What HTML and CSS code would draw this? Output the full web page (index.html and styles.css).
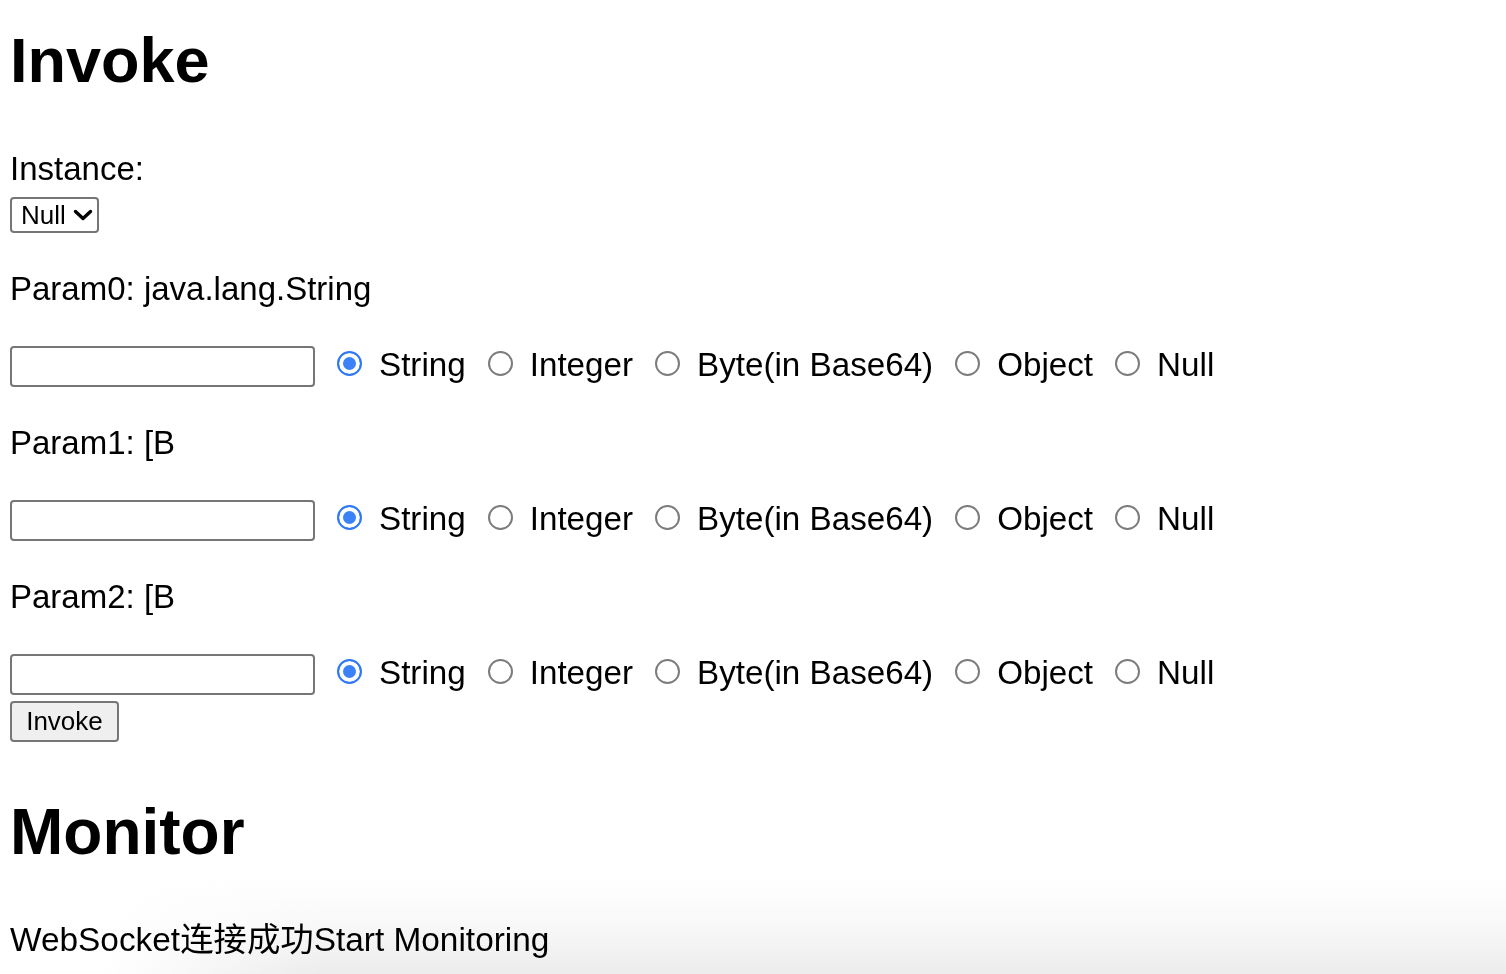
FILE: index.html
```html
<!DOCTYPE html>
<html lang="en">
<head>
<meta charset="utf-8">
<title>Invoke</title>
<link rel="stylesheet" href="styles.css">
</head>
<body>
<div class="page">
  <h1 class="title title-invoke">Invoke</h1>

  <div class="field-label label-instance">Instance:</div>
  <div class="select-wrap">
    <select class="select">
      <option>Null</option>
    </select>
    <svg class="chevron" width="20" height="12" viewBox="0 0 20 12" aria-hidden="true">
      <path d="M2.5 2.5 L10 9.5 L17.5 2.5" fill="none" stroke="#000" stroke-width="3.4" stroke-linecap="round" stroke-linejoin="round"/>
    </svg>
  </div>

  <div class="field-label param-label">Param0: java.lang.String</div>
  <div class="param-row">
    <input class="text-input" type="text">
    <label class="opt"><input type="radio" name="p0" checked><span>String</span></label>
    <label class="opt"><input type="radio" name="p0"><span>Integer</span></label>
    <label class="opt"><input type="radio" name="p0"><span>Byte(in Base64)</span></label>
    <label class="opt"><input type="radio" name="p0"><span>Object</span></label>
    <label class="opt"><input type="radio" name="p0"><span>Null</span></label>
  </div>

  <div class="field-label param-label">Param1: [B</div>
  <div class="param-row">
    <input class="text-input" type="text">
    <label class="opt"><input type="radio" name="p1" checked><span>String</span></label>
    <label class="opt"><input type="radio" name="p1"><span>Integer</span></label>
    <label class="opt"><input type="radio" name="p1"><span>Byte(in Base64)</span></label>
    <label class="opt"><input type="radio" name="p1"><span>Object</span></label>
    <label class="opt"><input type="radio" name="p1"><span>Null</span></label>
  </div>

  <div class="field-label param-label">Param2: [B</div>
  <div class="param-row">
    <input class="text-input" type="text">
    <label class="opt"><input type="radio" name="p2" checked><span>String</span></label>
    <label class="opt"><input type="radio" name="p2"><span>Integer</span></label>
    <label class="opt"><input type="radio" name="p2"><span>Byte(in Base64)</span></label>
    <label class="opt"><input type="radio" name="p2"><span>Object</span></label>
    <label class="opt"><input type="radio" name="p2"><span>Null</span></label>
  </div>
  <div class="actions">
    <button class="btn" type="button">Invoke</button>
  </div>

  <h1 class="title title-monitor">Monitor</h1>
  <div class="monitor-log">WebSocket连接成功Start Monitoring</div>
</div>
<div class="bottom-fade"></div>
</body>
</html>
```

FILE: styles.css
```css
html {
  background: #ffffff;
}

html, body {
  margin: 0;
  padding: 0;
}

body {
  font-family: "Liberation Sans", "Noto Sans CJK SC", sans-serif;
  font-size: 33px;
  line-height: 37px;
  color: #000000;
}

.page {
  padding: 0 10px;
  display: flex;
  flex-direction: column;
  align-items: flex-start;
}

.title {
  font-size: 63px;
  line-height: 74px;
  font-weight: bold;
  margin: 0;
}

.title-invoke {
  margin-top: 23px;
}

.title-monitor {
  margin-top: 53px;
  font-size: 64px;
}

.field-label {
  margin: 0;
}

.label-instance {
  margin-top: 53px;
}

.select-wrap {
  position: relative;
  display: inline-flex;
  margin-top: 10px;
}

.select {
  appearance: none;
  -webkit-appearance: none;
  box-sizing: border-box;
  width: 89px;
  height: 36px;
  margin: 0;
  padding: 0 0 0 9px;
  font-family: "Liberation Sans", sans-serif;
  font-size: 26px;
  color: #000;
  background: #ffffff;
  border: 2px solid #767676;
  border-radius: 4px;
}

.chevron {
  position: absolute;
  right: 6px;
  top: 12px;
  pointer-events: none;
}

.param-label {
  margin-top: 37px;
}

.param-row {
  display: flex;
  align-items: flex-start;
  margin-top: 39px;
}

.text-input {
  box-sizing: border-box;
  width: 305px;
  height: 41px;
  margin: 0;
  padding: 0 6px;
  font-family: "Liberation Sans", sans-serif;
  font-size: 26px;
  border: 2px solid #767676;
  border-radius: 4px;
  background: #ffffff;
}

.opt {
  display: flex;
  align-items: flex-start;
  margin-left: 22px;
  font-size: 33.2px;
  line-height: 37px;
  white-space: nowrap;
}

.opt input {
  appearance: none;
  -webkit-appearance: none;
  box-sizing: border-box;
  width: 25px;
  height: 25px;
  margin: 5px 17px 0 0;
  border: 2px solid #7c7c7c;
  border-radius: 50%;
  background: #ffffff;
}

.opt input:checked {
  border-color: #2f78f6;
  background: #3b82f6;
  box-shadow: inset 0 0 0 4px #ffffff;
}

.actions {
  margin-top: 5px;
}

.btn {
  box-sizing: border-box;
  width: 109px;
  height: 41px;
  margin: 0;
  padding: 0;
  font-family: "Liberation Sans", sans-serif;
  font-size: 26px;
  color: #000;
  background: #efefef;
  border: 2px solid #767676;
  border-radius: 4px;
}

.monitor-log {
  margin-top: 52px;
  font-size: 33.4px;
}

.bottom-fade {
  position: fixed;
  left: 0;
  right: 0;
  bottom: 0;
  height: 100px;
  z-index: -1;
  pointer-events: none;
  background: linear-gradient(to bottom, rgba(236, 236, 236, 0) 0%, rgba(236, 236, 236, 0.35) 50%, #ececec 100%);
  -webkit-mask-image: linear-gradient(to right, transparent 100px, #000 320px);
  mask-image: linear-gradient(to right, transparent 100px, #000 320px);
}
```
